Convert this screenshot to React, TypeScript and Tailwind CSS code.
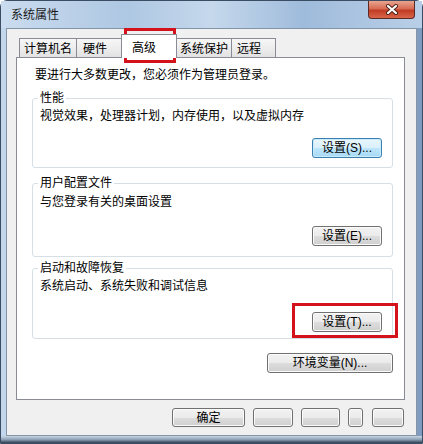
import React from 'react';
import clsx from 'clsx';

function WinButton({
  children,
  className,
  focused,
}: {
  children?: React.ReactNode;
  className?: string;
  focused?: boolean;
}) {
  return (
    <button
      className={clsx(
        'flex items-center justify-center rounded-[3px] border text-[12px] leading-none text-black',
        focused
          ? 'border-[#3c7fb1] bg-[linear-gradient(#eaf6fd_0%,#d9f0fc_50%,#bee6fd_50%,#a7d9f5_100%)] shadow-[inset_0_0_0_1px_#c8ecfb]'
          : 'border-[#707070] bg-[linear-gradient(#f2f2f2_0%,#ebebeb_50%,#dddddd_50%,#cfcfcf_100%)] shadow-[inset_0_0_0_1px_#fbfbfb]',
        className
      )}
    >
      {children}
    </button>
  );
}

function Tab({ label, className, active }: { label: string; className?: string; active?: boolean }) {
  return (
    <div
      className={clsx(
        'flex border-x border-t border-[#898c95] text-[12px] leading-[16px]',
        active
          ? 'z-10 -mb-px mx-[-2px] h-[24px] bg-white pt-[5px]'
          : 'h-[19px] -ml-px bg-[linear-gradient(#f7f7f7_0%,#ededed_50%,#e2e2e2_100%)] pt-[2px]',
        className
      )}
    >
      {label}
    </div>
  );
}

function Group({
  title,
  desc,
  btn,
  focused,
  className,
  descClass,
  btnClass,
}: {
  title: string;
  desc: string;
  btn: string;
  focused?: boolean;
  className?: string;
  descClass?: string;
  btnClass?: string;
}) {
  return (
    <fieldset className={clsx('flex min-w-0 flex-col rounded-[3px] border border-[#d5dfe5]', className)}>
      <legend className="ml-[5px] px-[2px] text-[12px] leading-[16px]">{title}</legend>
      <div className={clsx('pl-[7px] text-[12px] leading-[16px]', descClass)}>{desc}</div>
      <WinButton focused={focused} className={clsx('mr-[10px] h-[20px] w-[70px] self-end', btnClass)}>
        设置({btn})...
      </WinButton>
    </fieldset>
  );
}

export default function App() {
  return (
    <div className="relative h-[444px] w-[423px] overflow-hidden bg-white font-['Liberation_Sans','Noto_Sans_CJK_SC',sans-serif] text-black">
      <div className="flex h-full flex-col rounded-t-[7px] border border-[#3b4d63] bg-[linear-gradient(90deg,#c3d7ec_0%,#b7cde6_60%,#7f9cc0_100%)]">
        {/* title bar */}
        <div className="flex h-[27px] items-center bg-[linear-gradient(90deg,#cadcef_0%,#aec7e2_30%,#c5d8ec_50%,#9fbbdb_72%,#b9cfe7_100%)] pl-[10px]">
          <span className="text-[12px] leading-none text-[#1b1b1b]">系统属性</span>
          <div className="ml-auto mr-[7px] flex h-[18px] w-[47px] items-center justify-center self-start rounded-b-[4px] border border-t-0 border-[#5b2a24] bg-[linear-gradient(#e9a48f_0%,#d66c54_45%,#c13c24_55%,#d9654a_100%)]">
            <svg width="14" height="11" viewBox="0 0 14 11">
              <path d="M3 2 L11 9 M11 2 L3 9" stroke="#4a1e16" strokeWidth="4" strokeLinecap="round" />
              <path d="M3 2 L11 9 M11 2 L3 9" stroke="#ffffff" strokeWidth="2.2" strokeLinecap="round" />
            </svg>
          </div>
        </div>

        {/* client area */}
        <div className="mx-[5px] flex flex-1 flex-col border border-[#8495a9] bg-[#f0f0f0] pl-[9px] pr-[11px]">
          <div className="mt-[5px] flex h-[23px] items-end pl-[4px]">
            <Tab label="计算机名" className="w-[58px] pl-[4px]" />
            <Tab label="硬件" className="w-[47px] pl-[6px]" />
            <Tab label="高级" active className="w-[56px] pl-[10px]" />
            <Tab label="系统保护" className="w-[58px] pl-[5px]" />
            <Tab label="远程" className="w-[45px] pl-[5px]" />
          </div>

          <div className="flex h-[343px] flex-col border border-[#898c95] bg-white">
            <div className="ml-[18px] mt-[9px] text-[12px] leading-[16px]">要进行大多数更改，您必须作为管理员登录。</div>
            <div className="ml-[15px] mr-[11px] flex flex-col">
              <Group
                title="性能"
                desc="视觉效果，处理器计划，内存使用，以及虚拟内存"
                btn="S"
                focused
                className="mt-[7px] pb-[9px]"
                descClass="mt-[2px]"
                btnClass="mt-[14px]"
              />
              <Group
                title="用户配置文件"
                desc="与您登录有关的桌面设置"
                btn="E"
                className="mt-[7px] pb-[10px]"
                descClass="mt-[3px]"
                btnClass="mt-[16px]"
              />
              <Group
                title="启动和故障恢复"
                desc="系统启动、系统失败和调试信息"
                btn="T"
                className="mt-[3px] pb-[6px]"
                descClass="mt-[2px]"
                btnClass="mt-[18px]"
              />
              <WinButton className="mt-[14px] h-[20px] w-[126px] self-end">环境变量(N)...</WinButton>
            </div>
          </div>

          <div className="mt-[8px] flex items-start pl-[156px]">
            <WinButton className="h-[19px] w-[73px]">确定</WinButton>
            <WinButton className="ml-[8px] h-[19px] w-[40px]" />
            <WinButton className="ml-[8px] h-[19px] w-[39px]" />
            <WinButton className="ml-[8px] h-[19px] w-[15px]" />
            <WinButton className="ml-[9px] h-[19px] w-[32px]" />
          </div>
        </div>

        {/* bottom frame */}
        <div className="h-[7px] bg-[linear-gradient(#c9d6e3_0%,#8ea3b8_50%,#2f3f52_100%)]" />
      </div>

      {/* red highlight boxes */}
      <div className="absolute left-[124px] top-[28px] h-[35px] w-[52px] border-[3px] border-[#d3121c]" />
      <div className="absolute left-[292px] top-[303px] h-[35px] w-[106px] border-[3px] border-[#d3121c]" />
    </div>
  );
}
